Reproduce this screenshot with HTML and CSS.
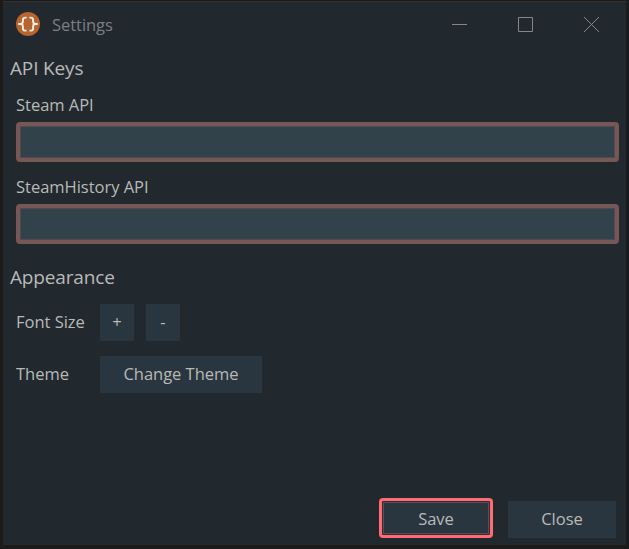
FILE: index.html
```html
<!DOCTYPE html>
<html lang="en">
<head>
<meta charset="utf-8">
<title>Settings</title>
<link rel="stylesheet" href="styles.css">
</head>
<body>
<main class="window">
  <header class="titlebar">
    <svg class="logo" width="24" height="24" viewBox="0 0 24 24">
      <circle cx="12" cy="12" r="12" fill="#b5652d"/>
      <g fill="none" stroke="#f4eeea" stroke-width="1.9">
        <path d="M10.6 5.6H9.4Q6.9 5.6 6.9 7.8V9.6Q6.9 12 4.4 12H2.2H4.4Q6.9 12 6.9 14.4V16.4Q6.9 18.6 9.4 18.6H10.6"/>
        <path d="M13.4 5.6H14.6Q17.1 5.6 17.1 7.8V9.6Q17.1 12 19.6 12H21.8H19.6Q17.1 12 17.1 14.4V16.4Q17.1 18.6 14.6 18.6H13.4"/>
      </g>
    </svg>
    <h1 class="title">Settings</h1>
    <div class="controls">
      <svg width="15" height="15" viewBox="0 0 15 15"><path d="M0 7.5H15"/></svg>
      <svg width="15" height="15" viewBox="0 0 15 15"><path d="M.5 .5H14.5V14.5H.5Z"/></svg>
      <svg width="15" height="15" viewBox="0 0 15 15"><path d="M0 0L15 15M15 0L0 15"/></svg>
    </div>
  </header>
  <h2 class="heading">API Keys</h2>
  <section class="keys">
    <label class="label" for="steam">Steam API</label>
    <input class="field" id="steam" type="text">
    <label class="label" for="history">SteamHistory API</label>
    <input class="field" id="history" type="text">
  </section>
  <h2 class="heading appearance">Appearance</h2>
  <section class="options">
    <div class="row">
      <span class="name">Font Size</span>
      <button class="button step">+</button>
      <button class="button step">-</button>
    </div>
    <div class="row">
      <span class="name">Theme</span>
      <button class="button change">Change Theme</button>
    </div>
  </section>
  <footer class="actions">
    <button class="button save">Save</button>
    <button class="button close">Close</button>
  </footer>
</main>
</body>
</html>
```
FILE: styles.css
```css
* { box-sizing: border-box; }
body {
  margin: 0;
  height: 549px;
  padding: 1px 3px 4px;
  background: #1b1b1b;
  color: #b9b9b7;
  font: 400 16.5px/22px "Open Sans", "Noto Sans", sans-serif;
  letter-spacing: -.02px;
  overflow: hidden;
}
.window {
  height: 544px;
  display: flex;
  flex-direction: column;
  background: #21292f;
  border-top: 1px solid #303030;
}
.titlebar {
  display: flex;
  align-items: center;
  height: 44px;
  padding: 0 27px 0 13px;
}
.logo { flex: none; }
.title {
  margin: 2px 0 0 12px;
  font-size: 16.5px;
  font-weight: 400;
  color: #7c7e80;
  letter-spacing: -.05px;
}
.controls { display: flex; gap: 51px; margin-left: auto; }
.controls svg { fill: none; stroke: #888785; stroke-width: 1; }
.heading {
  margin: 9px 0 0 7px;
  font-size: 19px;
  font-weight: 400;
  letter-spacing: -.15px;
  line-height: 26px;
  height: 26px;
}
.keys {
  display: flex;
  flex-direction: column;
  padding: 13px 7px 0 13px;
}
.label { height: 28px; }
.field {
  width: 100%;
  height: 40px;
  margin: 0 0 14px;
  padding: 4px;
  border: 4px solid #775656;
  border-radius: 4px;
  background: #32424a;
  box-shadow: inset 0 0 0 1px #514b50;
  color: inherit;
  font: inherit;
  outline: 0;
}
.appearance { margin-top: 6px; }
.options {
  display: flex;
  flex-direction: column;
  gap: 15px;
  padding: 14px 0 0 13px;
}
.row { display: flex; gap: 12px; align-items: center; }
.name { width: 72px; padding-bottom: 2px; white-space: nowrap; }
.button {
  height: 37px;
  padding: 0 0 2px;
  border: 0;
  background: #2a363f;
  color: inherit;
  font: inherit;
  letter-spacing: inherit;
}
.step { width: 34px; padding-bottom: 1px; }
.change { width: 162px; }
.actions {
  display: flex;
  align-items: center;
  justify-content: flex-end;
  gap: 15px;
  margin-top: auto;
  padding: 0 10px 7px 0;
}
.save {
  width: 114px;
  height: 40px;
  padding: 1px 0 0;
  border: 3px solid #ff6b73;
  border-radius: 4px;
  box-shadow: inset 0 0 0 1px #2a3037, inset 0 0 0 2px #654a52;
}
.close { width: 108px; margin-top: 3px; }
```
